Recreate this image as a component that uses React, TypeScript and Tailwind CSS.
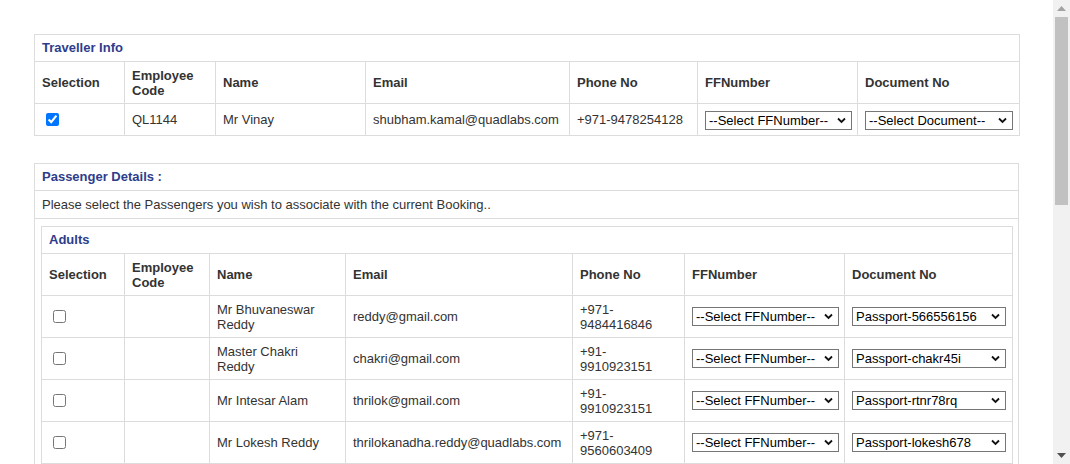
import React from "react";

const border = "border border-[#dcdcdc]";
const cell = `${border} px-[7px] py-0 align-middle text-left`;
const headCell = `${cell} font-bold`;

type Passenger = {
  name: string;
  email: string;
  phone: string;
  doc: string;
};

const adults: Passenger[] = [
  { name: "Mr Bhuvaneswar Reddy", email: "reddy@gmail.com", phone: "+971-9484416846", doc: "Passport-566556156" },
  { name: "Master Chakri Reddy", email: "chakri@gmail.com", phone: "+91-9910923151", doc: "Passport-chakr45i" },
  { name: "Mr Intesar Alam", email: "thrilok@gmail.com", phone: "+91-9910923151", doc: "Passport-rtnr78rq" },
  { name: "Mr Lokesh Reddy", email: "thrilokanadha.reddy@quadlabs.com", phone: "+971-9560603409", doc: "Passport-lokesh678" },
];

function Select({ value, width }: { value: string; width: string }) {
  return (
    <div className={`relative inline-block align-middle ${width}`}>
      <div className="flex h-[19px] w-full items-center border border-[#767676] bg-white pl-[3px] text-[13px] leading-[15px] text-black">
        {value}
      </div>
      <svg
        className="pointer-events-none absolute right-[6px] top-[6px]"
        width="9"
        height="7"
        viewBox="0 0 9 7"
      >
        <path d="M1 1.5 L4.5 5 L8 1.5" fill="none" stroke="#111" strokeWidth="1.8" />
      </svg>
    </div>
  );
}

function HeaderRow({ first }: { first: string }) {
  return (
    <tr className="h-[42px] leading-[15px]">
      <th className={headCell}>{first}</th>
      <th className={headCell}>
        Employee
        <br />
        Code
      </th>
      <th className={headCell}>Name</th>
      <th className={headCell}>Email</th>
      <th className={headCell}>Phone No</th>
      <th className={headCell}>FFNumber</th>
      <th className={headCell}>Document No</th>
    </tr>
  );
}

function Scrollbar() {
  return (
    <div className="flex h-full w-[17px] shrink-0 flex-col items-center bg-[#f1f1f1]">
      <div className="flex h-[17px] w-full items-center justify-center">
        <svg width="9" height="5" viewBox="0 0 9 5">
          <path d="M0 5 L4.5 0 L9 5 Z" fill="#a3a3a3" />
        </svg>
      </div>
      <div className="h-[188px] w-[13px] bg-[#c1c1c1]" />
      <div className="flex-1" />
      <div className="flex h-[17px] w-full items-center justify-center">
        <svg width="9" height="5" viewBox="0 0 9 5">
          <path d="M0 0 L4.5 5 L9 0 Z" fill="#505050" />
        </svg>
      </div>
    </div>
  );
}

export default function App() {
  return (
    <div className="flex h-[464px] w-[1070px] overflow-hidden bg-white font-['Liberation_Sans',Arial,sans-serif] text-[13px] text-[#333]">
      <div className="flex-1 overflow-hidden pl-[34px] pt-[34px]">
        <table className="w-[985px] table-fixed border-collapse">
          <colgroup>
            <col className="w-[90px]" />
            <col className="w-[91px]" />
            <col className="w-[150px]" />
            <col className="w-[204px]" />
            <col className="w-[128px]" />
            <col className="w-[160px]" />
            <col className="w-[162px]" />
          </colgroup>
          <tbody>
            <tr className="h-[27px]">
              <td colSpan={7} className={`${cell} font-bold text-[#2e3c8c]`}>
                Traveller Info
              </td>
            </tr>
            <HeaderRow first="Selection" />
            <tr className="h-[32px]">
              <td className={cell}>
                <input type="checkbox" defaultChecked className="m-0 ml-[4px] block h-[13px] w-[13px]" />
              </td>
              <td className={cell}>QL1144</td>
              <td className={cell}>Mr Vinay</td>
              <td className={cell}>shubham.kamal@quadlabs.com</td>
              <td className={cell}>+971-9478254128</td>
              <td className={cell}>
                <Select value="--Select FFNumber--" width="w-[147px]" />
              </td>
              <td className={cell}>
                <Select value="--Select Document--" width="w-[148px]" />
              </td>
            </tr>
          </tbody>
        </table>

        <table className="mt-[27px] w-[985px] table-fixed border-collapse">
          <tbody>
            <tr className="h-[27px]">
              <td className={`${cell} font-bold text-[#2e3c8c]`}>Passenger Details :</td>
            </tr>
            <tr className="h-[28px]">
              <td className={cell}>Please select the Passengers you wish to associate with the current Booking..</td>
            </tr>
            <tr>
              <td className={`${border} px-[6px] pt-[7px] align-top`}>
                <table className="w-[971px] table-fixed border-collapse">
                  <colgroup>
                    <col className="w-[83px]" />
                    <col className="w-[85px]" />
                    <col className="w-[136px]" />
                    <col className="w-[227px]" />
                    <col className="w-[112px]" />
                    <col className="w-[160px]" />
                    <col className="w-[168px]" />
                  </colgroup>
                  <tbody>
                    <tr className="h-[27px]">
                      <td colSpan={7} className={`${cell} font-bold text-[#2e3c8c]`}>
                        Adults
                      </td>
                    </tr>
                    <HeaderRow first="Selection" />
                    {adults.map((p) => (
                      <tr key={p.name} className="h-[42px] leading-[15px]">
                        <td className={cell}>
                          <input type="checkbox" className="m-0 ml-[4px] block h-[13px] w-[13px]" />
                        </td>
                        <td className={cell}></td>
                        <td className={cell}>{p.name}</td>
                        <td className={cell}>{p.email}</td>
                        <td className={cell}>{p.phone}</td>
                        <td className={cell}>
                          <Select value="--Select FFNumber--" width="w-[147px]" />
                        </td>
                        <td className={cell}>
                          <Select value={p.doc} width="w-[154px]" />
                        </td>
                      </tr>
                    ))}
                  </tbody>
                </table>
              </td>
            </tr>
          </tbody>
        </table>
      </div>
      <Scrollbar />
    </div>
  );
}
